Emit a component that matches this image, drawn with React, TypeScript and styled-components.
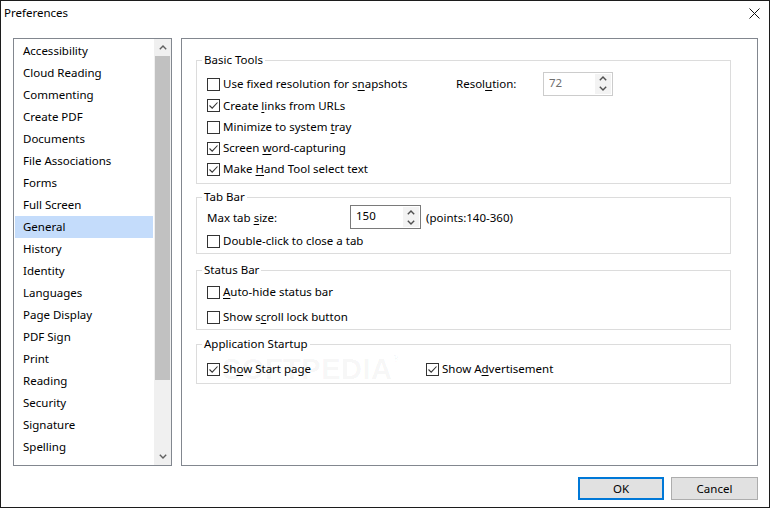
import React from 'react'
import styled, { createGlobalStyle } from 'styled-components'

const GlobalStyle = createGlobalStyle`
  html, body {
    margin: 0;
    padding: 0;
    background: #ffffff;
  }
  body {
    font-family: "Noto Sans", "Liberation Sans", sans-serif;
    font-size: 11.5px;
    color: #000000;
  }
  * {
    box-sizing: border-box;
  }
`

const Window = styled.div`
  width: 770px;
  height: 508px;
  border: 1px solid #1c1c1c;
  background: #ffffff;
  display: flex;
  flex-direction: column;
`

const TitleBar = styled.div`
  height: 24px;
  display: flex;
  align-items: center;
  justify-content: space-between;
  padding: 0 9px 2px 3px;
`

const Title = styled.div`
  font-size: 11.5px;
`

const CloseButton = styled.div`
  width: 11px;
  height: 11px;
  display: flex;
  margin-top: 2px;
`

const Body = styled.div`
  display: flex;
  gap: 9px;
  padding: 13px 11px 0 12px;
`

const ListBox = styled.div`
  width: 159px;
  height: 428px;
  border: 1px solid #82878f;
  display: flex;
`

const ListItems = styled.div`
  flex: 1;
  padding: 1px;
  overflow: hidden;
`

const ListItem = styled.div<{ $selected?: boolean }>`
  height: 22px;
  line-height: 21px;
  padding: 0 0 0 8px;
  white-space: nowrap;
  background: ${(p) => (p.$selected ? '#c4dcfb' : 'transparent')};
`

const Scrollbar = styled.div`
  width: 17px;
  background: #f0f0f0;
  display: flex;
  flex-direction: column;
`

const ScrollButton = styled.div`
  height: 17px;
  display: flex;
  align-items: center;
  justify-content: center;
`

const ScrollThumb = styled.div`
  height: 324px;
  margin: 0 1px 0 1px;
  background: #c1c1c1;
`

const ScrollTrack = styled.div`
  flex: 1;
`

const Panel = styled.div`
  position: relative;
  width: 577px;
  height: 428px;
  border: 1px solid #82878f;
  padding: 13px 26px 0 14px;
`

const Group = styled.fieldset<{ $mt: number; $pt: number; $pb: number }>`
  margin: ${(p) => p.$mt}px 0 0 0;
  padding: ${(p) => p.$pt}px 0 ${(p) => p.$pb}px 10px;
  border: 1px solid #dcdcdc;
  min-width: 0;
`

const Legend = styled.legend`
  padding: 0 2px;
  margin-left: -5px;
  line-height: 16px;
`

const Stack = styled.div<{ $gap: number }>`
  display: flex;
  flex-direction: column;
  gap: ${(p) => p.$gap}px;
`

const Row = styled.div<{ $h: number }>`
  height: ${(p) => p.$h}px;
  display: flex;
  align-items: center;
`

const CheckLabel = styled.label<{ $w?: number }>`
  display: inline-flex;
  align-items: center;
  gap: 3px;
  white-space: nowrap;
  line-height: 15px;
  ${(p) => (p.$w ? `width: ${p.$w}px;` : '')}
`

const Box = styled.span`
  width: 13px;
  height: 13px;
  margin-top: 1px;
  border: 1px solid #333333;
  background: #ffffff;
  display: inline-flex;
  align-items: center;
  justify-content: center;
`

const Key = styled.span`
  text-decoration: underline;
  text-underline-offset: 2px;
`

const FieldLabel = styled.span<{ $w: number }>`
  width: ${(p) => p.$w}px;
  white-space: nowrap;
`

const Spin = styled.div<{ $w: number; $disabled?: boolean }>`
  width: ${(p) => p.$w}px;
  height: 24px;
  border: 1px solid ${(p) => (p.$disabled ? '#cccccc' : '#7a7a7a')};
  color: ${(p) => (p.$disabled ? '#6d6d6d' : '#000000')};
  display: flex;
  justify-content: space-between;
  padding: 1px 1px 1px 5px;
`

const SpinValue = styled.span`
  line-height: 16px;
  padding-top: 1px;
`

const SpinArrows = styled.div`
  width: 16px;
  background: #f3f3f3;
  display: flex;
  flex-direction: column;
`

const SpinArrow = styled.div`
  flex: 1;
  display: flex;
  align-items: center;
  justify-content: center;
`

const Hint = styled.span`
  margin-left: 5px;
  white-space: nowrap;
`

const Watermark = styled.div`
  position: absolute;
  left: 40px;
  top: 314px;
  font-family: "Liberation Sans", sans-serif;
  font-weight: bold;
  font-size: 29px;
  letter-spacing: 0.5px;
  color: rgba(0, 0, 0, 0.045);
  pointer-events: none;
  sup {
    font-size: 10px;
    vertical-align: top;
  }
`

const Footer = styled.div`
  display: flex;
  justify-content: flex-end;
  gap: 7px;
  padding: 11px 11px 0 0;
`

const Button = styled.button<{ $primary?: boolean; $w: number }>`
  width: ${(p) => p.$w}px;
  height: 23px;
  font-family: inherit;
  font-size: 11.5px;
  color: #000000;
  background: #e1e1e1;
  border: ${(p) => (p.$primary ? '2px solid #0078d7' : '1px solid #adadad')};
  padding: 0 0 1px 0;
`

const Chevron = ({ up, color = '#606060' }: { up?: boolean; color?: string }) => (
  <svg width="8" height="5" viewBox="0 0 8 5">
    <path
      d={up ? 'M0.8 4.2 L4 1 L7.2 4.2' : 'M0.8 0.8 L4 4 L7.2 0.8'}
      fill="none"
      stroke={color}
      strokeWidth="1.4"
    />
  </svg>
)

const Check = ({ checked, children, w }: { checked?: boolean; children: React.ReactNode; w?: number }) => (
  <CheckLabel $w={w}>
    <Box>
      {checked && (
        <svg width="11" height="11" viewBox="0 0 11 11">
          <path d="M1.5 5.5 L4.2 8.2 L9.5 2.5" fill="none" stroke="#333" strokeWidth="1.1" />
        </svg>
      )}
    </Box>
    <span>{children}</span>
  </CheckLabel>
)

const SpinBox = ({ value, w, disabled }: { value: string; w: number; disabled?: boolean }) => (
  <Spin $w={w} $disabled={disabled}>
    <SpinValue>{value}</SpinValue>
    <SpinArrows>
      <SpinArrow>
        <Chevron up color="#505050" />
      </SpinArrow>
      <SpinArrow>
        <Chevron color="#505050" />
      </SpinArrow>
    </SpinArrows>
  </Spin>
)

const categories = [
  'Accessibility',
  'Cloud Reading',
  'Commenting',
  'Create PDF',
  'Documents',
  'File Associations',
  'Forms',
  'Full Screen',
  'General',
  'History',
  'Identity',
  'Languages',
  'Page Display',
  'PDF Sign',
  'Print',
  'Reading',
  'Security',
  'Signature',
  'Spelling',
  'Trust Manager',
]

export default function App() {
  return (
    <>
      <GlobalStyle />
      <Window>
        <TitleBar>
          <Title>Preferences</Title>
          <CloseButton>
            <svg width="11" height="11" viewBox="0 0 11 11">
              <path d="M0.5 0.5 L10.5 10.5 M10.5 0.5 L0.5 10.5" stroke="#111" strokeWidth="1" />
            </svg>
          </CloseButton>
        </TitleBar>

        <Body>
          <ListBox>
            <ListItems>
              {categories.map((c) => (
                <ListItem key={c} $selected={c === 'General'}>
                  {c}
                </ListItem>
              ))}
            </ListItems>
            <Scrollbar>
              <ScrollButton>
                <Chevron up />
              </ScrollButton>
              <ScrollThumb />
              <ScrollTrack />
              <ScrollButton>
                <Chevron />
              </ScrollButton>
            </Scrollbar>
          </ListBox>

          <Panel>
            <Group $mt={0} $pt={5} $pb={4}>
              <Legend>Basic Tools</Legend>
              <Stack $gap={0}>
                <Row $h={21}>
                  <Check w={249}>
                    Use fixed resolution for s<Key>n</Key>apshots
                  </Check>
                  <FieldLabel $w={87}>
                    Resol<Key>u</Key>tion:
                  </FieldLabel>
                  <SpinBox value="72" w={70} disabled />
                </Row>
                <Row $h={22}>
                  <Check checked>
                    Create <Key>l</Key>inks from URLs
                  </Check>
                </Row>
                <Row $h={21}>
                  <Check>
                    Minimize to system <Key>t</Key>ray
                  </Check>
                </Row>
                <Row $h={21}>
                  <Check checked>
                    Screen <Key>w</Key>ord-capturing
                  </Check>
                </Row>
                <Row $h={21}>
                  <Check checked>
                    Make <Key>H</Key>and Tool select text
                  </Check>
                </Row>
              </Stack>
            </Group>

            <Group $mt={5} $pt={0} $pb={2}>
              <Legend>Tab Bar</Legend>
              <Stack $gap={1}>
                <Row $h={24}>
                  <FieldLabel $w={143}>
                    Max tab <Key>s</Key>ize:
                  </FieldLabel>
                  <SpinBox value="150" w={71} />
                  <Hint>(points:140-360)</Hint>
                </Row>
                <Row $h={21}>
                  <Check>Double-click to close a tab</Check>
                </Row>
              </Stack>
            </Group>

            <Group $mt={8} $pt={3} $pb={2}>
              <Legend>Status Bar</Legend>
              <Stack $gap={4}>
                <Row $h={21}>
                  <Check>
                    <Key>A</Key>uto-hide status bar
                  </Check>
                </Row>
                <Row $h={21}>
                  <Check>
                    Show s<Key>c</Key>roll lock button
                  </Check>
                </Row>
              </Stack>
            </Group>

            <Group $mt={6} $pt={6} $pb={4}>
              <Legend>Application Startup</Legend>
              <Stack $gap={0}>
                <Row $h={21}>
                  <Check checked w={219}>
                    Sh<Key>o</Key>w Start page
                  </Check>
                  <Check checked>
                    Show A<Key>d</Key>vertisement
                  </Check>
                </Row>
              </Stack>
            </Group>

            <Watermark>
              SOFTPEDIA<sup>®</sup>
            </Watermark>
          </Panel>
        </Body>

        <Footer>
          <Button $primary $w={86}>
            OK
          </Button>
          <Button $w={87}>Cancel</Button>
        </Footer>
      </Window>
    </>
  )
}
